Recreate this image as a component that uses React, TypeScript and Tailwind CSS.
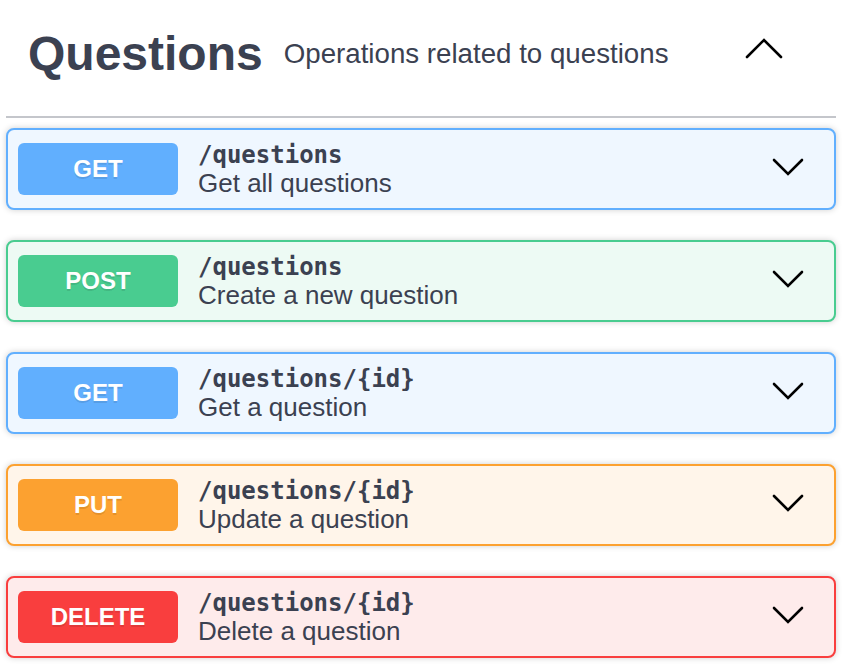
import React from "react";

type Op = {
  method: string;
  path: string;
  summary: string;
  border: string;
  bg: string;
  badge: string;
};

const ops: Op[] = [
  { method: "GET", path: "/questions", summary: "Get all questions", border: "border-[#61affe]", bg: "bg-[#eff7ff]", badge: "bg-[#61affe]" },
  { method: "POST", path: "/questions", summary: "Create a new question", border: "border-[#49cc90]", bg: "bg-[#edfaf4]", badge: "bg-[#49cc90]" },
  { method: "GET", path: "/questions/{id}", summary: "Get a question", border: "border-[#61affe]", bg: "bg-[#eff7ff]", badge: "bg-[#61affe]" },
  { method: "PUT", path: "/questions/{id}", summary: "Update a question", border: "border-[#fca130]", bg: "bg-[#fff5ea]", badge: "bg-[#fca130]" },
  { method: "DELETE", path: "/questions/{id}", summary: "Delete a question", border: "border-[#f93e3e]", bg: "bg-[#feebeb]", badge: "bg-[#f93e3e]" },
];

function OpBlock({ op }: { op: Op }) {
  return (
    <div
      className={`flex items-center h-[82px] rounded-[8px] border-2 ${op.border} ${op.bg} shadow-[0_0_6px_rgba(0,0,0,0.19)] px-[10px]`}
    >
      <div
        className={`w-[160px] h-[52px] shrink-0 rounded-[6px] ${op.badge} flex items-center justify-center text-white font-bold text-[24px] [text-shadow:0_2px_0_rgba(0,0,0,0.1)]`}
        style={{ fontFamily: '"Liberation Sans", Arial, sans-serif' }}
      >
        {op.method}
      </div>
      <div className="ml-[20px] flex flex-col text-[#3b4151]">
        <div
          className="text-[24px] leading-[28px] font-bold"
          style={{ fontFamily: '"DejaVu Sans Mono", monospace' }}
        >
          {op.path}
        </div>
        <div
          className="text-[26px] leading-[28px]"
          style={{ fontFamily: '"Liberation Sans", Arial, sans-serif' }}
        >
          {op.summary}
        </div>
      </div>
      <svg
        className="ml-auto mr-[20px] mb-[4px] shrink-0"
        width="32"
        height="20"
        viewBox="0 0 32 20"
        fill="none"
      >
        <polyline points="2,3 16,17 30,3" stroke="#000" strokeWidth="2.6" strokeLinecap="round" strokeLinejoin="miter" />
      </svg>
    </div>
  );
}

export default function App() {
  return (
    <div className="w-[842px] h-[664px] bg-white px-[6px] overflow-hidden">
      <div className="flex items-center pt-[30px] pb-[38px] pl-[22px] border-b-2 border-[#c4c6cb]">
        <h3
          className="text-[48px] leading-[48px] font-bold text-[#3b4151]"
          style={{ fontFamily: '"Liberation Sans", Arial, sans-serif' }}
        >
          Questions
        </h3>
        <div
          className="ml-[21px] flex-1 text-[27.7px] leading-[32px] text-[#3b4151]"
          style={{ fontFamily: '"Liberation Sans", Arial, sans-serif' }}
        >
          Operations related to questions
        </div>
        <svg
          className="mr-[53px] mb-[11px] shrink-0"
          width="38"
          height="22"
          viewBox="0 0 38 22"
          fill="none"
        >
          <polyline points="2,19 19,2 36,19" stroke="#000" strokeWidth="2.6" strokeLinecap="round" />
        </svg>
      </div>
      <div className="mt-[10px] flex flex-col gap-[30px]">
        {ops.map((op, i) => (
          <OpBlock key={i} op={op} />
        ))}
      </div>
    </div>
  );
}
